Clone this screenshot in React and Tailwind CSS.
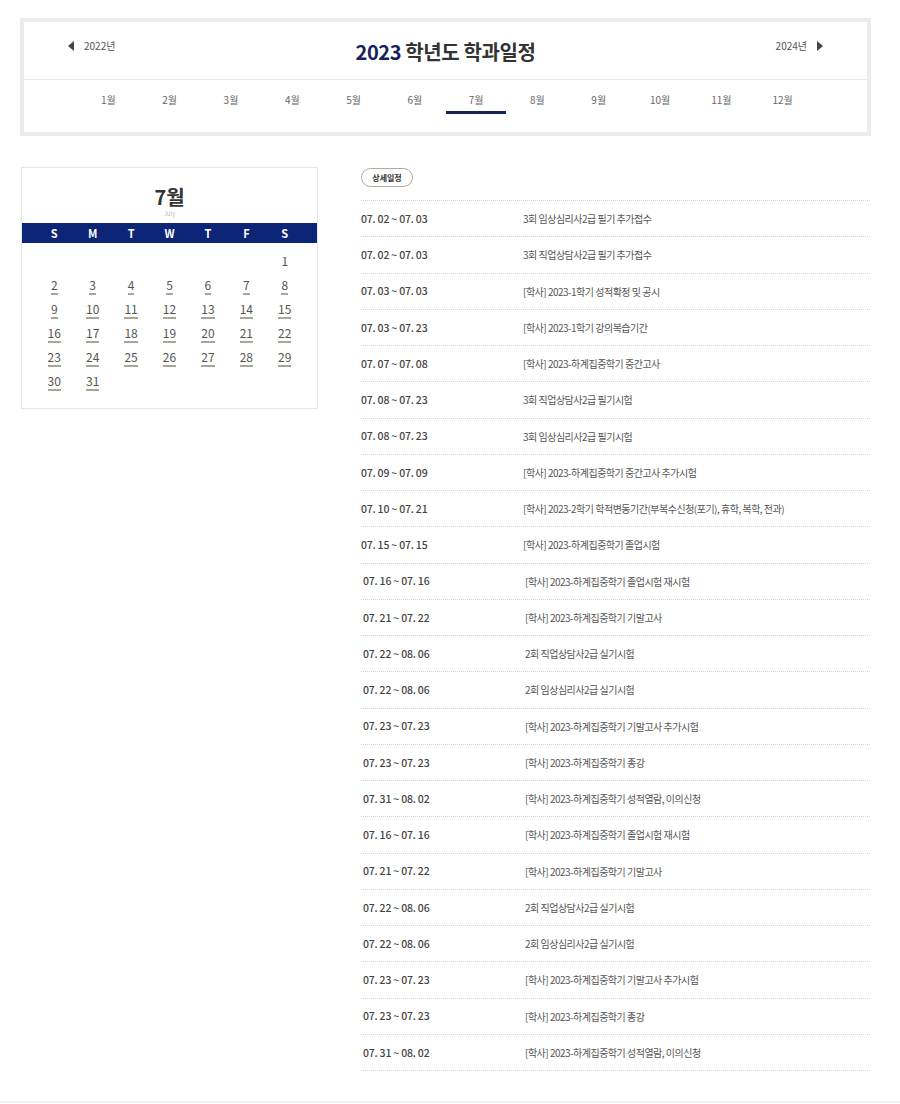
import React from 'react';

const FONT = { fontFamily: '"Noto Sans CJK KR", "Noto Sans", sans-serif' };

const months = ['1월', '2월', '3월', '4월', '5월', '6월', '7월', '8월', '9월', '10월', '11월', '12월'];

const schedule = [
  ['07. 02 ~ 07. 03', '3회 임상심리사2급 필기 추가접수'],
  ['07. 02 ~ 07. 03', '3회 직업상담사2급 필기 추가접수'],
  ['07. 03 ~ 07. 03', '[학사] 2023-1학기 성적확정 및 공시'],
  ['07. 03 ~ 07. 23', '[학사] 2023-1학기 강의복습기간'],
  ['07. 07 ~ 07. 08', '[학사] 2023-하계집중학기 중간고사'],
  ['07. 08 ~ 07. 23', '3회 직업상담사2급 필기시험'],
  ['07. 08 ~ 07. 23', '3회 임상심리사2급 필기시험'],
  ['07. 09 ~ 07. 09', '[학사] 2023-하계집중학기 중간고사 추가시험'],
  ['07. 10 ~ 07. 21', '[학사] 2023-2학기 학적변동기간(부복수신청(포기), 휴학, 복학, 전과)'],
  ['07. 15 ~ 07. 15', '[학사] 2023-하계집중학기 졸업시험'],
  ['07. 16 ~ 07. 16', '[학사] 2023-하계집중학기 졸업시험 재시험'],
  ['07. 21 ~ 07. 22', '[학사] 2023-하계집중학기 기말고사'],
  ['07. 22 ~ 08. 06', '2회 직업상담사2급 실기시험'],
  ['07. 22 ~ 08. 06', '2회 임상심리사2급 실기시험'],
  ['07. 23 ~ 07. 23', '[학사] 2023-하계집중학기 기말고사 추가시험'],
  ['07. 23 ~ 07. 23', '[학사] 2023-하계집중학기 종강'],
  ['07. 31 ~ 08. 02', '[학사] 2023-하계집중학기 성적열람, 이의신청'],
  ['07. 16 ~ 07. 16', '[학사] 2023-하계집중학기 졸업시험 재시험'],
  ['07. 21 ~ 07. 22', '[학사] 2023-하계집중학기 기말고사'],
  ['07. 22 ~ 08. 06', '2회 직업상담사2급 실기시험'],
  ['07. 22 ~ 08. 06', '2회 임상심리사2급 실기시험'],
  ['07. 23 ~ 07. 23', '[학사] 2023-하계집중학기 기말고사 추가시험'],
  ['07. 23 ~ 07. 23', '[학사] 2023-하계집중학기 종강'],
  ['07. 31 ~ 08. 02', '[학사] 2023-하계집중학기 성적열람, 이의신청'],
];

// July 2023 starts on Saturday
const days = [...Array(6).fill(null), ...Array.from({ length: 31 }, (_, i) => i + 1)];

function Calendar() {
  return (
    <div className="w-[297px] shrink-0 border border-[#e6e6e6] bg-white">
      <div className="flex flex-col items-center pt-[16px] pb-[5px]">
        <span className="text-[20px] font-bold leading-[26px] text-[#333]">7월</span>
        <span className="text-[6px] leading-[8px] text-[#bbb]">July</span>
      </div>
      <div className="grid grid-cols-7 bg-[#0c2577] px-[13px]">
        {['S', 'M', 'T', 'W', 'T', 'F', 'S'].map((d, i) => (
          <div key={i} className="flex h-[20px] items-center justify-center text-[11px] font-bold text-white">
            {d}
          </div>
        ))}
      </div>
      <div className="grid grid-cols-7 px-[13px] pt-[10px] pb-[11px]">
        {days.map((d, i) => (
          <div key={i} className="flex h-[24px] flex-col items-center">
            {d && (
              <span
                className={`text-[12px] leading-[16px] text-[#555] ${
                  d === 1 ? '' : 'border-b-2 border-[#aca597]'
                }`}
              >
                {d}
              </span>
            )}
          </div>
        ))}
      </div>
    </div>
  );
}

export default function App() {
  return (
    <div className="min-h-[1104px] bg-white" style={FONT}>
      <div className="px-[20px] pt-[18px]">
        <div className="w-[851px] border-4 border-[#ececec] bg-white">
          <div className="flex h-[58px] items-center justify-between border-b border-[#e8e8e8] pl-[44px] pr-[44px]">
            <div className="flex w-[120px] items-center gap-[10px] pb-[10px]">
              <span className="h-0 w-0 border-y-[5px] border-r-[6px] border-y-transparent border-r-[#444]" />
              <span className="text-[10px] text-[#555]">2022년</span>
            </div>
            <h1 className="pt-[2px] text-[20px] font-bold tracking-[-0.02em] text-[#333]">
              <span className="text-[#14245a]">2023</span> 학년도 학과일정
            </h1>
            <div className="flex w-[120px] items-center justify-end gap-[10px] pb-[10px]">
              <span className="text-[10px] text-[#555]">2024년</span>
              <span className="h-0 w-0 border-y-[5px] border-l-[6px] border-y-transparent border-l-[#444]" />
            </div>
          </div>
          <div className="flex h-[52px] justify-center pt-[12px]">
            {months.map((m) => (
              <div key={m} className="flex w-[61.3px] flex-col items-center">
                <span className="text-[10px] leading-[16px] text-[#666]">{m}</span>
                {m === '7월' && <span className="mt-[3px] h-[3px] w-[60px] bg-[#14245a]" />}
              </div>
            ))}
          </div>
        </div>
      </div>

      <div className="flex items-start gap-[43px] pl-[21px] pt-[31px]">
        <Calendar />
        <div className="w-[509px]">
          <button
            type="button"
            className="mt-[1px] flex h-[19px] w-[52px] items-center justify-center rounded-full border border-[#b5ab9c] text-[8px] font-bold text-[#333]"
          >
            상세일정
          </button>
          <div className="mt-[13px] border-t border-dotted border-[#d6d6d6]">
            {schedule.map(([date, title], i) => (
              <div
                key={i}
                className={`flex h-[36.25px] items-center border-b border-dotted border-[#d6d6d6] ${
                  i >= 10 ? 'pl-[2px]' : ''
                }`}
              >
                <span className="w-[162px] shrink-0 text-[10.5px] font-medium tracking-[-0.02em] text-[#444]">
                  {date}
                </span>
                <span className="text-[10px] tracking-[-0.05em] text-[#555]">{title}</span>
              </div>
            ))}
          </div>
        </div>
      </div>
      <div className="mt-[30px] h-[2px] w-full bg-[#f0f0f2]" />
    </div>
  );
}
